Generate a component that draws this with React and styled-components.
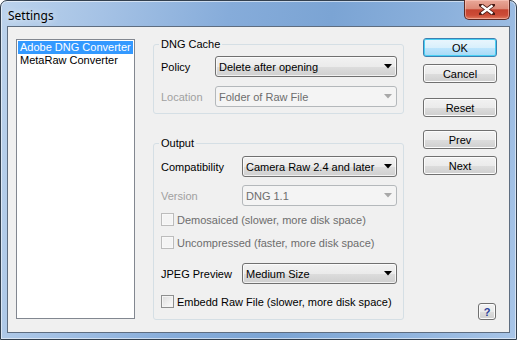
import React from 'react'
import styled, { createGlobalStyle } from 'styled-components'

const GlobalStyle = createGlobalStyle`
  body {
    margin: 0;
    font-family: "Liberation Sans", Arial, sans-serif;
    font-size: 11px;
  }
`

const Window = styled.div`
  box-sizing: border-box;
  width: 517px;
  height: 340px;
  display: flex;
  flex-direction: column;
  padding: 0 6px 6px 6px;
  border: 1px solid #33404f;
  border-radius: 7px 7px 0 0;
  background: linear-gradient(100deg, #bcd3ec 0%, #a5c2e5 18%, #86acda 40%, #7ba4d4 58%, #8cb1dc 78%, #a8c5e8 100%);
  box-shadow: inset 0 0 0 1px rgba(255, 255, 255, 0.55);
`

const TitleBar = styled.div`
  height: 28px;
  display: flex;
  align-items: flex-start;
  justify-content: space-between;
`

const Title = styled.span`
  font-family: "Noto Sans", "Liberation Sans", sans-serif;
  font-size: 12px;
  color: #000;
  margin: 6px 0 0 1px;
  text-shadow: 0 0 6px rgba(255, 255, 255, 0.9);
`

const CloseButton = styled.div`
  box-sizing: border-box;
  width: 46px;
  height: 20px;
  margin: -1px 0 0 0;
  border: 1px solid #5d2a24;
  border-top: none;
  border-radius: 0 0 5px 5px;
  background: linear-gradient(#e9a899 0%, #dd8a78 45%, #c5432f 52%, #cc4c37 80%, #df7a5e 100%);
  box-shadow: inset 0 0 0 1px rgba(255, 210, 200, 0.5);
  display: flex;
  align-items: center;
  justify-content: center;
`

const Client = styled.div`
  flex: 1;
  display: flex;
  background: #f0f0f0;
  border: 1px solid #5e6d80;
  padding: 11px 0 12px 8px;
`

const ListBox = styled.div`
  box-sizing: border-box;
  width: 119px;
  height: 280px;
  margin-top: 1px;
  padding: 1px;
  background: #fff;
  border: 1px solid #828790;
`

const ListItem = styled.div`
  height: 13px;
  line-height: 13px;
  padding-left: 2px;
  white-space: nowrap;
  color: ${p => (p.$selected ? '#fff' : '#000')};
  background: ${p => (p.$selected ? '#3399ff' : 'transparent')};
`

const Groups = styled.div`
  width: 251px;
  margin-left: 18px;
  display: flex;
  flex-direction: column;
`

const Group = styled.fieldset`
  margin: ${p => p.$top || 0}px 0 0 0;
  padding: ${p => p.$padTop}px 6px ${p => p.$padBottom}px 7px;
  border: 1px solid #d5dfe5;
  border-radius: 3px;
  min-width: 0;
`

const Legend = styled.legend`
  padding: 0 2px;
  margin-left: -2px;
  line-height: 13px;
  color: #000;
`

const Row = styled.div`
  display: grid;
  grid-template-columns: ${p => p.$labelWidth}px 1fr;
  align-items: center;
  height: 21px;
  margin-top: ${p => p.$top || 0}px;
`

const Label = styled.span`
  color: ${p => (p.$disabled ? '#a0a0a0' : '#000')};
  white-space: nowrap;
`

const Dropdown = styled.div`
  box-sizing: border-box;
  height: 21px;
  display: flex;
  align-items: center;
  justify-content: space-between;
  padding: 0 4px 0 3px;
  border: 1px solid ${p => (p.$disabled ? '#b4b8bb' : '#707070')};
  border-radius: 3px;
  color: ${p => (p.$disabled ? '#6d6d6d' : '#000')};
  background: ${p =>
    p.$disabled
      ? '#f4f4f4'
      : 'linear-gradient(#f2f2f2 0%, #ebebeb 50%, #dddddd 51%, #cfcfcf 100%)'};
  box-shadow: ${p => (p.$disabled ? 'none' : 'inset 0 0 0 1px rgba(255,255,255,0.7)')};
  white-space: nowrap;
`

const CheckRow = styled.label`
  display: flex;
  align-items: center;
  height: 13px;
  margin-top: ${p => p.$top || 0}px;
  color: ${p => (p.$disabled ? '#6d6d6d' : '#000')};
  white-space: nowrap;
`

const Box = styled.span`
  box-sizing: border-box;
  width: 13px;
  height: 13px;
  margin-right: 3px;
  flex: none;
  border: 1px solid ${p => (p.$disabled ? '#bcbcbc' : '#8e8f8f')};
  background: ${p =>
    p.$disabled ? '#f4f4f4' : 'linear-gradient(135deg, #dcdcdc 0%, #f0f0f0 60%, #fbfbfb 100%)'};
  box-shadow: inset 0 0 0 1px ${p => (p.$disabled ? '#f8f8f8' : '#f4f4f4')};
`

const Buttons = styled.div`
  width: 74px;
  margin-left: 19px;
  display: flex;
  flex-direction: column;
`

const Button = styled.div`
  box-sizing: border-box;
  height: 19px;
  margin-top: ${p => p.$top || 0}px;
  display: flex;
  align-items: center;
  justify-content: center;
  border: 1px solid ${p => (p.$default ? '#3c7fb1' : '#707070')};
  border-radius: 3px;
  color: #000;
  background: ${p =>
    p.$default
      ? 'linear-gradient(#eaf6fd 0%, #d9f0fc 50%, #bee6fd 51%, #a7d9f5 100%)'
      : 'linear-gradient(#f2f2f2 0%, #ebebeb 50%, #dddddd 51%, #cfcfcf 100%)'};
  box-shadow: inset 0 0 0 1px ${p => (p.$default ? '#48d0f4' : '#fcfcfc')};
`

const HelpButton = styled(Button)`
  width: 18px;
  height: 17px;
  margin-top: auto;
  align-self: flex-end;
  margin-right: 1px;
  color: #2a3f9a;
  font-weight: bold;
`

function Arrow({ disabled }) {
  return (
    <svg width="8" height="5" viewBox="0 0 8 5">
      <path d="M0 0 H8 L4 4.5 Z" fill={disabled ? '#a8a8a8' : '#000'} />
    </svg>
  )
}

function CloseGlyph() {
  return (
    <svg width="16" height="11" viewBox="0 0 16 11">
      <path d="M2 1 L14 10 M14 1 L2 10" stroke="#4a1a14" strokeWidth="4" strokeLinecap="square" />
      <path d="M2.5 1.5 L13.5 9.5 M13.5 1.5 L2.5 9.5" stroke="#fff" strokeWidth="2.2" />
    </svg>
  )
}

function Select({ value, disabled }) {
  return (
    <Dropdown $disabled={disabled}>
      <span>{value}</span>
      <Arrow disabled={disabled} />
    </Dropdown>
  )
}

function Check({ label, disabled, top }) {
  return (
    <CheckRow $disabled={disabled} $top={top}>
      <Box $disabled={disabled} />
      {label}
    </CheckRow>
  )
}

export default function App() {
  return (
    <>
      <GlobalStyle />
      <Window>
        <TitleBar>
          <Title>Settings</Title>
          <CloseButton>
            <CloseGlyph />
          </CloseButton>
        </TitleBar>
        <Client>
          <ListBox>
            <ListItem $selected>Adobe DNG Converter</ListItem>
            <ListItem>MetaRaw Converter</ListItem>
          </ListBox>

          <Groups>
            <Group $padTop={5} $padBottom={6}>
              <Legend>DNG Cache</Legend>
              <Row $labelWidth={54}>
                <Label>Policy</Label>
                <Select value="Delete after opening" />
              </Row>
              <Row $labelWidth={54} $top={9}>
                <Label $disabled>Location</Label>
                <Select value="Folder of Raw File" disabled />
              </Row>
            </Group>

            <Group $top={23} $padTop={6} $padBottom={11}>
              <Legend>Output</Legend>
              <Row $labelWidth={81}>
                <Label>Compatibility</Label>
                <Select value="Camera Raw 2.4 and later" />
              </Row>
              <Row $labelWidth={81} $top={8}>
                <Label $disabled>Version</Label>
                <Select value="DNG 1.1" disabled />
              </Row>
              <Check label="Demosaiced (slower, more disk space)" disabled top={7} />
              <Check label="Uncompressed (faster, more disk space)" disabled top={10} />
              <Row $labelWidth={81} $top={14}>
                <Label>JPEG Preview</Label>
                <Select value="Medium Size" />
              </Row>
              <Check label="Embedd Raw File (slower, more disk space)" top={11} />
            </Group>
          </Groups>

          <Buttons>
            <Button $default>OK</Button>
            <Button $top={7}>Cancel</Button>
            <Button $top={15}>Reset</Button>
            <Button $top={13}>Prev</Button>
            <Button $top={7}>Next</Button>
            <HelpButton>?</HelpButton>
          </Buttons>
        </Client>
      </Window>
    </>
  )
}
